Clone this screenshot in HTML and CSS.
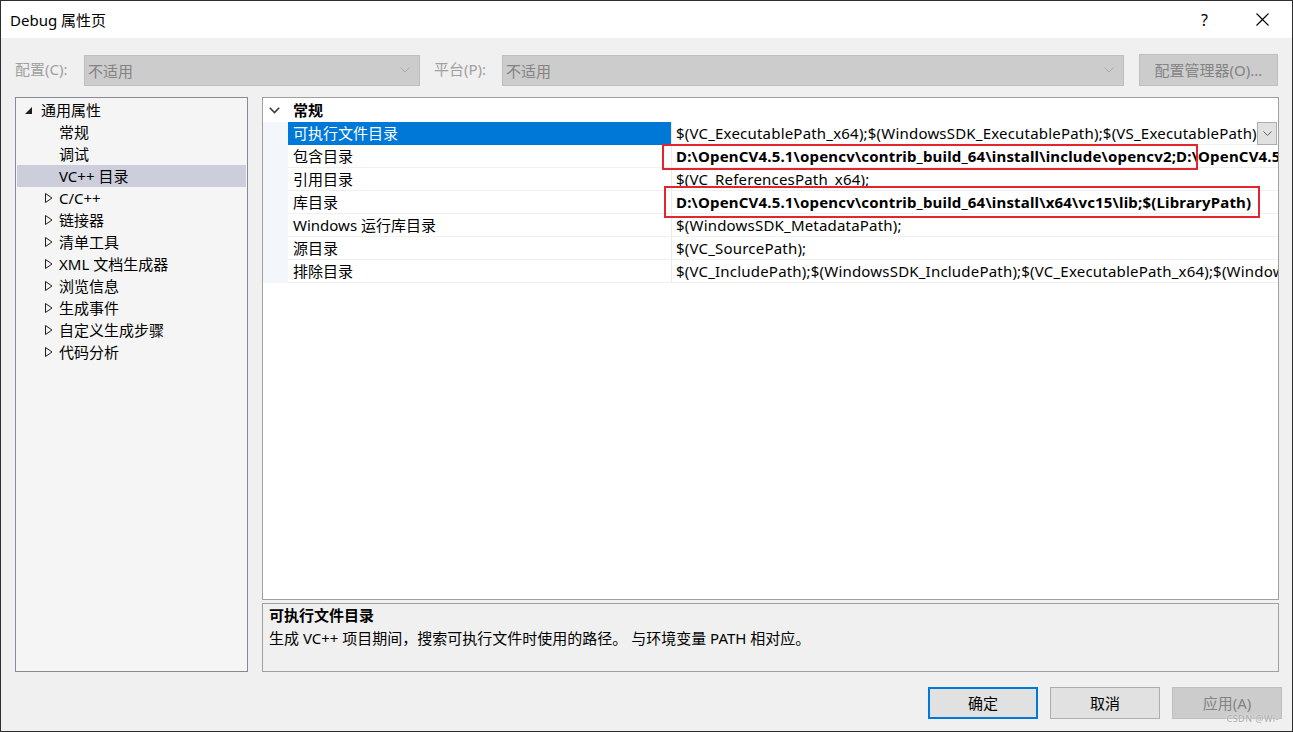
FILE: index.html
```html
<!DOCTYPE html>
<html lang="zh-CN">
<head>
	<meta charset="UTF-8">
	<title>Debug 属性页</title>
	<link rel="stylesheet" href="styles.css">
</head>

<body>
	<div class="window">
		<div class="titlebar">
			<span class="title">Debug 属性页</span>
			<span class="help">?</span>
			<span class="close">
				<svg width="13" height="13" viewBox="0 0 13 13"><path d="M0.5 0.5 L12.5 12.5 M12.5 0.5 L0.5 12.5" stroke="#000" stroke-width="1.1" fill="none"/></svg>
			</span>
		</div>

		<div class="toolbar">
			<span class="label label-config">配置(C):</span>
			<div class="combo combo-config">
				<span class="combo-text">不适用</span>
				<svg class="combo-arrow" width="10" height="6" viewBox="0 0 10 6"><path d="M0.5 0.5 L5 5 L9.5 0.5" stroke="#a8a8a8" fill="none"/></svg>
			</div>
			<span class="label label-platform">平台(P):</span>
			<div class="combo combo-platform">
				<span class="combo-text">不适用</span>
				<svg class="combo-arrow" width="10" height="6" viewBox="0 0 10 6"><path d="M0.5 0.5 L5 5 L9.5 0.5" stroke="#a8a8a8" fill="none"/></svg>
			</div>
			<div class="btn btn-disabled btn-manager">配置管理器(O)...</div>
		</div>

		<div class="main">
			<div class="tree">
				<div class="node node-root">
					<span class="twisty twisty-open"><svg width="8" height="8" viewBox="0 0 8 8"><path d="M7 0 L7 7 L0 7 Z" fill="#1e1e1e"/></svg></span>通用属性
				</div>
				<div class="node node-leaf">常规</div>
				<div class="node node-leaf">调试</div>
				<div class="node node-leaf node-selected">VC++ 目录</div>
				<div class="node node-child"><span class="twisty"><svg width="8" height="10" viewBox="0 0 8 10"><path d="M0.5 0.5 L7 5 L0.5 9.5 Z" fill="none" stroke="#1e1e1e"/></svg></span>C/C++</div>
				<div class="node node-child"><span class="twisty"><svg width="8" height="10" viewBox="0 0 8 10"><path d="M0.5 0.5 L7 5 L0.5 9.5 Z" fill="none" stroke="#1e1e1e"/></svg></span>链接器</div>
				<div class="node node-child"><span class="twisty"><svg width="8" height="10" viewBox="0 0 8 10"><path d="M0.5 0.5 L7 5 L0.5 9.5 Z" fill="none" stroke="#1e1e1e"/></svg></span>清单工具</div>
				<div class="node node-child"><span class="twisty"><svg width="8" height="10" viewBox="0 0 8 10"><path d="M0.5 0.5 L7 5 L0.5 9.5 Z" fill="none" stroke="#1e1e1e"/></svg></span>XML 文档生成器</div>
				<div class="node node-child"><span class="twisty"><svg width="8" height="10" viewBox="0 0 8 10"><path d="M0.5 0.5 L7 5 L0.5 9.5 Z" fill="none" stroke="#1e1e1e"/></svg></span>浏览信息</div>
				<div class="node node-child"><span class="twisty"><svg width="8" height="10" viewBox="0 0 8 10"><path d="M0.5 0.5 L7 5 L0.5 9.5 Z" fill="none" stroke="#1e1e1e"/></svg></span>生成事件</div>
				<div class="node node-child"><span class="twisty"><svg width="8" height="10" viewBox="0 0 8 10"><path d="M0.5 0.5 L7 5 L0.5 9.5 Z" fill="none" stroke="#1e1e1e"/></svg></span>自定义生成步骤</div>
				<div class="node node-child"><span class="twisty"><svg width="8" height="10" viewBox="0 0 8 10"><path d="M0.5 0.5 L7 5 L0.5 9.5 Z" fill="none" stroke="#1e1e1e"/></svg></span>代码分析</div>
			</div>

			<div class="right">
				<div class="grid">
					<div class="grid-head">
						<span class="gutter gutter-head"><svg width="11" height="7" viewBox="0 0 11 7"><path d="M0.8 0.8 L5.5 5.5 L10.2 0.8" stroke="#3c3c3c" stroke-width="1.6" fill="none"/></svg></span>
						<span class="cat">常规</span>
					</div>
					<div class="prop prop-selected">
						<span class="gutter"></span>
						<span class="name">可执行文件目录</span>
						<span class="value">
							<span class="value-text">$(VC_ExecutablePath_x64);$(WindowsSDK_ExecutablePath);$(VS_ExecutablePath);$(MSBuild_ExecutablePath);$(FxCopDir);$(PATH);</span>
							<span class="drop"><svg width="9" height="6" viewBox="0 0 9 6"><path d="M0.5 0.5 L4.5 4.5 L8.5 0.5" stroke="#606060" fill="none"/></svg></span>
						</span>
					</div>
					<div class="prop">
						<span class="gutter"></span>
						<span class="name">包含目录</span>
						<span class="value"><span class="value-text value-bold">D:\OpenCV4.5.1\opencv\contrib_build_64\install\include\opencv2;D:\OpenCV4.5.1\opencv\contrib_build_64\install\include;$(IncludePath)</span></span>
					</div>
					<div class="prop">
						<span class="gutter"></span>
						<span class="name">引用目录</span>
						<span class="value"><span class="value-text">$(VC_ReferencesPath_x64);</span></span>
					</div>
					<div class="prop">
						<span class="gutter"></span>
						<span class="name">库目录</span>
						<span class="value"><span class="value-text value-bold">D:\OpenCV4.5.1\opencv\contrib_build_64\install\x64\vc15\lib;$(LibraryPath)</span></span>
					</div>
					<div class="prop">
						<span class="gutter"></span>
						<span class="name">Windows 运行库目录</span>
						<span class="value"><span class="value-text">$(WindowsSDK_MetadataPath);</span></span>
					</div>
					<div class="prop">
						<span class="gutter"></span>
						<span class="name">源目录</span>
						<span class="value"><span class="value-text">$(VC_SourcePath);</span></span>
					</div>
					<div class="prop">
						<span class="gutter"></span>
						<span class="name">排除目录</span>
						<span class="value"><span class="value-text">$(VC_IncludePath);$(WindowsSDK_IncludePath);$(VC_ExecutablePath_x64);$(WindowsSDK_ExecutablePath);$(VS_ExecutablePath)</span></span>
					</div>

					<div class="mark mark-include"></div>
					<div class="mark mark-lib"></div>
				</div>

				<div class="desc">
					<div class="desc-title">可执行文件目录</div>
					<div class="desc-text">生成 VC++ 项目期间，搜索可执行文件时使用的路径。 与环境变量 PATH 相对应。</div>
				</div>
			</div>
		</div>

		<div class="footer">
			<a href="javascript:;" class="btn btn-default">确定</a>
			<a href="javascript:;" class="btn">取消</a>
			<a href="javascript:;" class="btn btn-disabled">应用(A)</a>
		</div>

		<div class="watermark">CSDN @Wi-</div>
	</div>
</body>
</html>
```

FILE: styles.css
```css
* {
	box-sizing: border-box;
}

body {
	margin: 0;
	padding: 0;
	font-family: "Noto Sans", "Noto Sans CJK SC", sans-serif;
	font-size: 15px;
	color: #000;
}

.window {
	position: relative;
	width: 1293px;
	height: 732px;
	border: 1px solid #2d2d2d;
	background: #f0f0f0;
	display: flex;
	flex-direction: column;
	overflow: hidden;
}

/* 标题栏 */
.titlebar {
	height: 37px;
	flex: none;
	background: #fff;
	display: flex;
	align-items: center;
	padding-left: 9px;
}

.title {
	flex: 1;
}

.help {
	width: 12px;
	margin-right: 43px;
	font-size: 16px;
}

.close {
	display: flex;
	margin-right: 23px;
}

/* 配置 / 平台 */
.toolbar {
	height: 59px;
	flex: none;
	display: flex;
	align-items: flex-start;
	padding: 16px 0 0 14px;
}

.label {
	height: 31px;
	line-height: 31px;
	color: #a0a0a0;
}

.label-config {
	width: 69px;
}

.label-platform {
	width: 68px;
	margin-left: 14px;
}

.combo {
	height: 31px;
	margin-top: 1px;
	background: #cccccc;
	border: 1px solid #bfbfbf;
	display: flex;
	align-items: center;
	padding: 0 9px 1px 3px;
	color: #838383;
}

.combo-text {
	flex: 1;
}

.combo-config {
	width: 336px;
}

.combo-platform {
	width: 622px;
}

.btn {
	display: flex;
	align-items: center;
	justify-content: center;
	height: 32px;
	width: 110px;
	padding-bottom: 1px;
	background: #e1e1e1;
	border: 1px solid #adadad;
	color: #000;
	text-decoration: none;
}

.btn-disabled {
	background: #cccccc;
	border-color: #bfbfbf;
	color: #838383;
}

.btn-manager {
	width: 139px;
	margin-left: 15px;
}

.btn-default {
	border: 2px solid #0078d7;
}

/* 左侧树 */
.main {
	height: 575px;
	flex: none;
	display: flex;
	padding: 0 13px 0 14px;
	gap: 14px;
}

.tree {
	width: 233px;
	flex: none;
	background: #f5f5f5;
	border: 1px solid #868a93;
	padding-top: 1px;
}

.node {
	height: 22px;
	line-height: 22px;
	display: flex;
	align-items: center;
	white-space: nowrap;
}

.node-root {
	padding-left: 9px;
}

.node-child {
	padding-left: 29px;
}

.node-leaf {
	padding-left: 43px;
}

.node-selected {
	background: #cccedb;
	margin: 0 1px;
	padding-left: 42px;
}

.twisty {
	display: flex;
	width: 14px;
}

.twisty-open {
	width: 16px;
	padding-top: 1px;
}

/* 右侧属性表 */
.right {
	flex: 1;
	min-width: 0;
	display: flex;
	flex-direction: column;
	gap: 3px;
}

.grid {
	position: relative;
	height: 503px;
	background: #fff;
	border: 1px solid #a0a0a0;
	overflow: hidden;
}

.grid-head {
	height: 24px;
	display: flex;
	align-items: center;
	padding-bottom: 1px;
}

.gutter {
	width: 25px;
	height: 100%;
	flex: none;
	background: #f3f6fb;
}

.gutter-head {
	background: #fff;
	display: flex;
	align-items: center;
	padding: 2px 0 0 6px;
}

.cat {
	font-weight: bold;
	padding-left: 5px;
}

.prop {
	height: 23px;
	line-height: 22px;
	display: flex;
	white-space: nowrap;
}

.name {
	width: 383px;
	flex: none;
	padding-left: 5px;
	border-bottom: 1px solid #f0f0f0;
}

.prop-selected .name {
	background: #0078d7;
	color: #fff;
	border-bottom-color: #0078d7;
}

.value {
	flex: 1;
	min-width: 0;
	display: flex;
	border-left: 1px solid #ebebeb;
	border-bottom: 1px solid #f0f0f0;
	padding-left: 4px;
}

.value-text {
	flex: 1;
	min-width: 0;
	overflow: hidden;
	letter-spacing: 0.2px;
}

.value-bold {
	font-weight: bold;
	letter-spacing: 0.18px;
}

.drop {
	width: 20px;
	height: 23px;
	flex: none;
	margin-right: 1px;
	background: #e1e1e1;
	border: 1px solid #adadad;
	display: flex;
	align-items: center;
	justify-content: center;
}

/* 标注红框 */
.mark {
	position: absolute;
	border: 2px solid #e3262d;
}

.mark-include {
	left: 399px;
	top: 46px;
	width: 536px;
	height: 26px;
}

.mark-lib {
	left: 401px;
	top: 88px;
	width: 596px;
	height: 32px;
}

/* 说明 */
.desc {
	height: 69px;
	background: #f0f0f0;
	border: 1px solid #a0a0a0;
	padding: 0 6px;
}

.desc-title {
	height: 23px;
	line-height: 23px;
	font-weight: bold;
}

.desc-text {
	height: 23px;
	line-height: 23px;
}

/* 按钮 */
.footer {
	flex: 1;
	display: flex;
	justify-content: flex-end;
	align-items: flex-start;
	gap: 12px;
	padding: 15px 10px 0 0;
}

.watermark {
	position: absolute;
	right: 13px;
	bottom: 8px;
	font-size: 9px;
	line-height: 9px;
	color: #a8a8a8;
	text-shadow: 0 0 2px #fff;
	letter-spacing: 0.5px;
}
```
